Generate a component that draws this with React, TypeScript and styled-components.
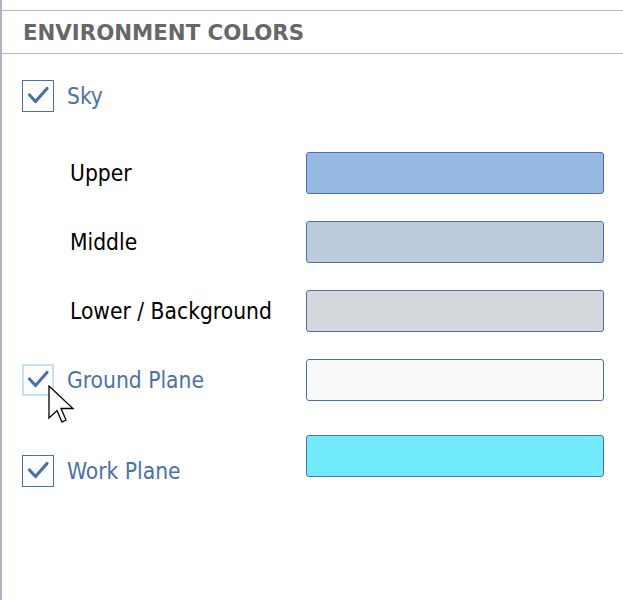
import React from "react";
import styled, { createGlobalStyle } from "styled-components";

const FONT = `"DejaVu Sans", Verdana, sans-serif`;
const BODY_FONT = `"DejaVu Sans Condensed", "DejaVu Sans", Verdana, sans-serif`;

const Global = createGlobalStyle`
  html, body { margin: 0; padding: 0; background: #ffffff; }
  body { font-family: ${FONT}; }
`;

const Panel = styled.div`
  position: relative;
  width: 623px;
  height: 600px;
  box-sizing: border-box;
  padding-top: 10px;
  border-left: 2px solid #aab4c5;
  background: #fff;
  overflow: hidden;
`;

const Header = styled.div`
  height: 42px;
  box-sizing: content-box;
  border-top: 1px solid #b1bbc9;
  border-bottom: 1px solid #b1bbc9;
  display: flex;
  align-items: center;
  padding-left: 21px;
  font-family: ${FONT};
  font-weight: bold;
  font-size: 21.3px;
  color: #676767;
`;

const Body = styled.div`
  display: flex;
  flex-direction: column;
  padding: 0 19px 0 20px;
`;

const Row = styled.div<{ $mt: number; $align?: string }>`
  display: flex;
  align-items: ${(p) => p.$align || "center"};
  justify-content: space-between;
  margin-top: ${(p) => p.$mt}px;
  min-height: 42px;
`;

const LabelWrap = styled.div<{ $pt?: number }>`
  display: flex;
  align-items: center;
  gap: 13px;
  padding-top: ${(p) => p.$pt || 0}px;
`;

const Box = styled.div<{ $hover?: boolean }>`
  width: 32px;
  height: 32px;
  box-sizing: border-box;
  border: ${(p) => (p.$hover ? "2px solid #c3e2f1" : "1px solid #4a72a8")};
  display: flex;
  align-items: center;
  justify-content: center;
  position: relative;
`;

const CheckLabel = styled.span`
  font-family: ${BODY_FONT};
  font-size: 22.6px;
  color: #4a72a8;
`;

const SubLabel = styled.span`
  font-family: ${BODY_FONT};
  font-size: 22.6px;
  color: #000;
  padding-left: 48px;
`;

const Swatch = styled.div<{ $color: string }>`
  width: 296px;
  height: 40px;
  border: 1px solid #4a72a8;
  border-radius: 3px;
  background: ${(p) => p.$color};
  flex-shrink: 0;
`;

const Cursor = styled.svg`
  position: absolute;
  left: 45px;
  top: 385px;
  pointer-events: none;
`;

const Check = () => (
  <svg width="24" height="20" viewBox="0 0 24 20">
    <polyline
      points="3.5,9 9.5,15.5 21,2.5"
      fill="none"
      stroke="#4a72a8"
      strokeWidth="3.2"
      strokeLinecap="round"
      strokeLinejoin="round"
    />
  </svg>
);

const CheckBox = ({ hover }: { hover?: boolean }) => (
  <Box $hover={hover}>
    <Check />
  </Box>
);

export default function App() {
  return (
    <>
      <Global />
      <Panel>
        <Header>ENVIRONMENT COLORS</Header>
        <Body>
          <Row $mt={21}>
            <LabelWrap>
              <CheckBox />
              <CheckLabel>Sky</CheckLabel>
            </LabelWrap>
          </Row>
          <Row $mt={35}>
            <SubLabel>Upper</SubLabel>
            <Swatch $color="#96b9e2" />
          </Row>
          <Row $mt={27}>
            <SubLabel>Middle</SubLabel>
            <Swatch $color="#bccbdb" />
          </Row>
          <Row $mt={27}>
            <SubLabel>Lower / Background</SubLabel>
            <Swatch $color="#d4d8dc" />
          </Row>
          <Row $mt={27}>
            <LabelWrap>
              <CheckBox hover />
              <CheckLabel>Ground Plane</CheckLabel>
            </LabelWrap>
            <Swatch $color="#f9f9f9" />
          </Row>
          <Row $mt={34} $align="flex-start">
            <LabelWrap $pt={20}>
              <CheckBox />
              <CheckLabel>Work Plane</CheckLabel>
            </LabelWrap>
            <Swatch $color="#72ebfe" />
          </Row>
        </Body>
        <Cursor width="28" height="40" viewBox="0 0 28 40">
          <polygon
            points="2,1 2,33 10,25.5 15,37 19,35 14,23.5 26,23.5"
            fill="#ffffff"
            stroke="#000000"
            strokeWidth="1.3"
            strokeLinejoin="miter"
          />
        </Cursor>
      </Panel>
    </>
  );
}
